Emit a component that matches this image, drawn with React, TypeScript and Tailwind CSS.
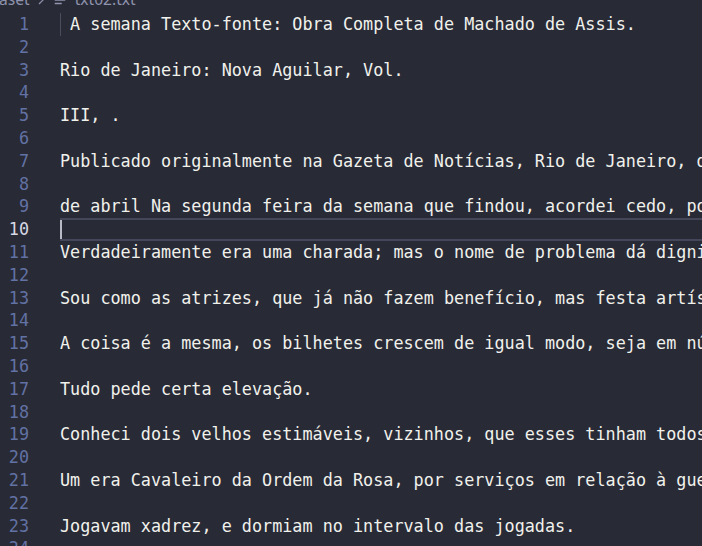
const lines: string[] = [
  " A semana Texto-fonte: Obra Completa de Machado de Assis.",
  "",
  "Rio de Janeiro: Nova Aguilar, Vol.",
  "",
  "III, .",
  "",
  "Publicado originalmente na Gazeta de Notícias, Rio de Janeiro, de 1892 a 1897.",
  "",
  "de abril Na segunda feira da semana que findou, acordei cedo, pouco depois das galinhas.",
  "",
  "Verdadeiramente era uma charada; mas o nome de problema dá dignidade à coisa.",
  "",
  "Sou como as atrizes, que já não fazem benefício, mas festa artística.",
  "",
  "A coisa é a mesma, os bilhetes crescem de igual modo, seja em número, seja em preço.",
  "",
  "Tudo pede certa elevação.",
  "",
  "Conheci dois velhos estimáveis, vizinhos, que esses tinham todos os dias juntos.",
  "",
  "Um era Cavaleiro da Ordem da Rosa, por serviços em relação à guerra do Paraguai.",
  "",
  "Jogavam xadrez, e dormiam no intervalo das jogadas.",
  "",
];

function Breadcrumb() {
  return (
    <div className="h-[13px] overflow-hidden">
      <div
        className="flex items-center h-[26px] -mt-[13px] text-[15.6px] text-[#8f93ad] whitespace-nowrap"
        style={{ fontFamily: '"Noto Sans", sans-serif' }}
      >
        <span className="-ml-[25px]">dataset</span>
        <svg width="16" height="16" viewBox="0 0 16 16" className="ml-[3px]">
          <path d="M6 4l4 4-4 4" fill="none" stroke="#8f93ad" strokeWidth="1.2" />
        </svg>
        <svg width="14" height="14" viewBox="0 0 16 16" className="ml-[4px]">
          <path d="M2 4h12M2 8h12M2 12h8" stroke="#8f93ad" strokeWidth="1.6" />
        </svg>
        <span className="ml-[8px]">txt02.txt</span>
      </div>
    </div>
  );
}

export default function App() {
  return (
    <div
      className="w-[702px] h-[546px] bg-[#282a36] overflow-hidden"
      style={{ fontFamily: '"DejaVu Sans Mono", monospace' }}
    >
      <Breadcrumb />
      <div className="text-[16.8px] leading-[22.8px]">
        {lines.map((text, i) => {
          const n = i + 1;
          const active = n === 10;
          return (
            <div key={n} className="flex h-[22.8px]">
              <div
                className={`w-[29px] shrink-0 text-right ${active ? "text-[#d6d8e4]" : "text-[#6272a4]"}`}
              >
                {n}
              </div>
              <div
                className={`relative ml-[31px] flex-1 whitespace-pre overflow-hidden text-[#f1f1ec] ${
                  active ? "border-y-2 border-[#44475a]" : ""
                }`}
              >
                {n === 1 && (
                  <span className="absolute left-0 top-0 h-full w-px bg-[#4a4d5e]" />
                )}
                {active && (
                  <span className="absolute left-0 -top-[2px] h-[22.8px] w-[2px] bg-[#b8bac6]" />
                )}
                {text}
              </div>
            </div>
          );
        })}
      </div>
    </div>
  );
}
